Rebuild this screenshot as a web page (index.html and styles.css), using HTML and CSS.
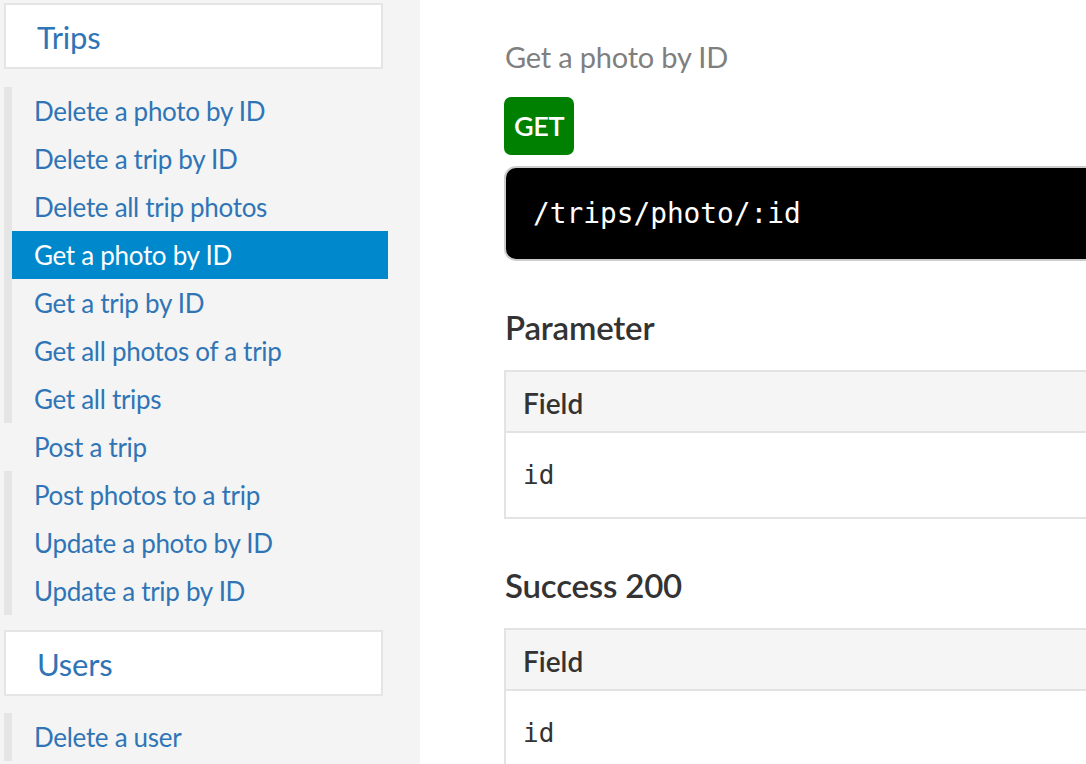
FILE: index.html
```html
<!DOCTYPE html>
<html lang="en">
<head>
<meta charset="utf-8">
<title>API Docs - Get a photo by ID</title>
<link rel="stylesheet" href="styles.css">
</head>
<body>
<div class="page">
  <nav class="sidebar">
    <div class="nav-header">Trips</div>
    <ul class="nav-group">
      <li class="nav-item"><a href="#">Delete a photo by ID</a></li>
      <li class="nav-item"><a href="#">Delete a trip by ID</a></li>
      <li class="nav-item"><a href="#">Delete all trip photos</a></li>
      <li class="nav-item is-active"><a href="#">Get a photo by ID</a></li>
      <li class="nav-item"><a href="#">Get a trip by ID</a></li>
      <li class="nav-item"><a href="#">Get all photos of a trip</a></li>
      <li class="nav-item"><a href="#">Get all trips</a></li>
    </ul>
    <ul class="nav-group nav-group--plain">
      <li class="nav-item"><a href="#">Post a trip</a></li>
    </ul>
    <ul class="nav-group">
      <li class="nav-item"><a href="#">Post photos to a trip</a></li>
      <li class="nav-item"><a href="#">Update a photo by ID</a></li>
      <li class="nav-item"><a href="#">Update a trip by ID</a></li>
    </ul>
    <div class="nav-header nav-header--next">Users</div>
    <ul class="nav-group">
      <li class="nav-item"><a href="#">Delete a user</a></li>
    </ul>
  </nav>
  <main class="content">
    <article class="endpoint">
      <h1 class="endpoint-title">Get a photo by ID</h1>
      <span class="method method--get">GET</span>
      <pre class="endpoint-url"><code>/trips/photo/:id</code></pre>

      <h2 class="section-title">Parameter</h2>
      <table class="fields">
        <thead><tr><th>Field</th></tr></thead>
        <tbody><tr><td class="field-name">id</td></tr></tbody>
      </table>

      <h2 class="section-title">Success 200</h2>
      <table class="fields">
        <thead><tr><th>Field</th></tr></thead>
        <tbody><tr><td class="field-name">id</td></tr></tbody>
      </table>
    </article>
  </main>
</div>
</body>
</html>
```
FILE: styles.css
```css
* { box-sizing: border-box; }

html, body {
  margin: 0;
  padding: 0;
  height: 100%;
  overflow: hidden;
  background: #ffffff;
}

body {
  font-family: "Lato", "Source Sans Pro", "Noto Sans", sans-serif;
  color: #333333;
}

.page {
  display: flex;
  min-height: 100vh;
}

/* ---------- sidebar ---------- */
.sidebar {
  flex: 0 0 420px;
  width: 420px;
  min-height: 100vh;
  background: #f4f4f4;
  padding: 3px 0 0 4px;
}

.nav-header {
  width: 379px;
  height: 66px;
  background: #ffffff;
  border: 2px solid #e5e5e5;
  color: #2f75b6;
  font-size: 31px;
  line-height: 64px;
  padding-left: 31px;
  margin-bottom: 18px;
  letter-spacing: -0.2px;
}

.nav-header--next {
  margin-top: 15px;
  margin-bottom: 17px;
}

.nav-group {
  list-style: none;
  margin: 0;
  padding: 0;
  border-left: 8px solid #e5e5e5;
  width: 384px;
}

.nav-group--plain {
  border-left-color: transparent;
}

.nav-item a {
  display: block;
  height: 48px;
  line-height: 48px;
  padding-left: 22px;
  font-size: 26px;
  letter-spacing: -0.3px;
  color: #2f75b6;
  text-decoration: none;
  white-space: nowrap;
}

.nav-item.is-active a {
  background: #0088cc;
  color: #ffffff;
}

/* ---------- content ---------- */
.content {
  flex: 0 0 auto;
  padding: 37px 0 0 84px;
}

.endpoint {
  width: 760px;
}

.endpoint-title {
  margin: 0;
  font-size: 29px;
  font-weight: normal;
  line-height: 40px;
  color: #7f7f7f;
  padding-left: 1px;
  letter-spacing: -0.2px;
}

.method {
  display: inline-block;
  margin-top: 20px;
  height: 58px;
  line-height: 58px;
  padding: 0 10px;
  border-radius: 7px;
  font-size: 27px;
  font-weight: 600;
  color: #ffffff;
  vertical-align: top;
  letter-spacing: -0.3px;
}

.method--get {
  background: #008000;
}

.endpoint-url {
  margin: 11px 0 0 0;
  height: 95px;
  background: #000000;
  border: 2px solid #cccccc;
  border-radius: 12px;
  padding: 0 0 0 27px;
  display: flex;
  align-items: center;
}

.endpoint-url code {
  font-family: "DejaVu Sans Mono", "Liberation Mono", monospace;
  font-size: 27.8px;
  color: #ffffff;
}

.section-title {
  margin: 44px 0 21px 0;
  font-size: 33px;
  font-weight: 600;
  line-height: 44px;
  color: #333333;
  padding-left: 1px;
  letter-spacing: -0.2px;
}

.fields {
  width: 100%;
  border-collapse: collapse;
  border: 2px solid #e3e3e3;
}

.fields th {
  background: #f5f5f5;
  border-bottom: 2px solid #e3e3e3;
  height: 61px;
  text-align: left;
  padding: 2px 0 0 17px;
  font-size: 28px;
  font-weight: 600;
  color: #333333;
}

.fields td {
  height: 86px;
  padding: 0 0 0 17px;
  vertical-align: middle;
}

.field-name {
  font-family: "DejaVu Sans Mono", "Liberation Mono", monospace;
  font-size: 26px;
  color: #333333;
}
```
